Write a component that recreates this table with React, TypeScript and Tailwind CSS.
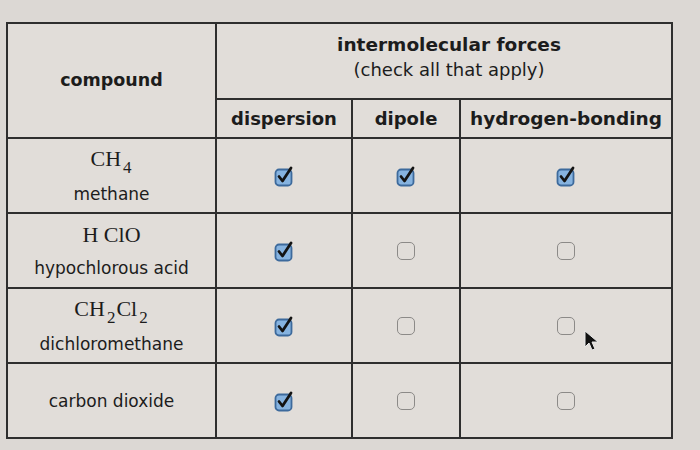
import React from "react";

type Row = {
  formula: React.ReactNode;
  name: string;
  checks: [boolean, boolean, boolean];
};

const sub = (n: string) => (
  <span className="relative top-[7px] text-[17px] ml-[2px] mr-[1px]">{n}</span>
);

const ROWS: Row[] = [
  { formula: <>CH{sub("4")}</>, name: "methane", checks: [true, true, true] },
  { formula: <>H ClO</>, name: "hypochlorous acid", checks: [true, false, false] },
  { formula: <>CH{sub("2")}Cl{sub("2")}</>, name: "dichloromethane", checks: [true, false, false] },
  { formula: null, name: "carbon dioxide", checks: [true, false, false] },
];

function Checked() {
  return (
    <svg width="22" height="22" viewBox="0 0 22 22" className="mx-auto block">
      <rect x="2.5" y="4.5" width="16" height="16" rx="3.5" fill="#86b3e0" stroke="#3d6a9c" strokeWidth="1.8" />
      <path d="M6 11.5 L9.5 16 L18 3" fill="none" stroke="#141414" strokeWidth="2.8" strokeLinecap="round" strokeLinejoin="round" />
    </svg>
  );
}

function Unchecked() {
  return <div className="mx-auto w-[18px] h-[18px] rounded-[5px] border-[1.5px] border-[#8c8a88]" />;
}

export default function App() {
  return (
    <div
      className="relative w-[700px] h-[450px] bg-[#dcd8d4] overflow-hidden pt-[22px] pl-[6px]"
      style={{ fontFamily: '"DejaVu Sans", Verdana, sans-serif' }}
    >
      <table className="border-collapse table-fixed w-[665px] text-[#1c1c1c] bg-[#e1ddd9]">
        <colgroup>
          <col className="w-[209px]" />
          <col className="w-[136px]" />
          <col className="w-[108px]" />
          <col className="w-[212px]" />
        </colgroup>
        <thead>
          <tr className="h-[76px]">
            <th rowSpan={2} className="border-2 border-[#2e2e2e] text-[17.5px] font-bold">
              compound
            </th>
            <th colSpan={3} className="border-2 border-[#2e2e2e] text-center align-middle pl-[10px] pb-[8px]">
              <div className="text-[18.5px] font-bold leading-[25px]">intermolecular forces</div>
              <div className="text-[18px] font-normal leading-[25px]">(check all that apply)</div>
            </th>
          </tr>
          <tr className="h-[39px]">
            <th className="border-2 border-[#2e2e2e] text-[18px] font-bold">dispersion</th>
            <th className="border-[1px] border-l-2 border-b-2 border-[#2e2e2e] text-[18px] font-bold">dipole</th>
            <th className="border-2 border-[#2e2e2e] text-[18.5px] font-bold">hydrogen-bonding</th>
          </tr>
        </thead>
        <tbody>
          {ROWS.map((row) => (
            <tr key={row.name} className="h-[75px]">
              <td className="border-2 border-[#2e2e2e] text-center">
                {row.formula && (
                  <div
                    className="text-[22px] leading-[26px] mb-[9px]"
                    style={{ fontFamily: '"Liberation Serif", "Times New Roman", serif' }}
                  >
                    {row.formula}
                  </div>
                )}
                <div className="text-[17px] leading-[22px]">{row.name}</div>
              </td>
              {row.checks.map((c, i) => (
                <td
                  key={i}
                  className={
                    i === 1
                      ? "border-y-2 border-x-[1px] border-[#2e2e2e] border-r-[#5a5a5a]"
                      : "border-2 border-[#2e2e2e]"
                  }
                >
                  {c ? <Checked /> : <Unchecked />}
                </td>
              ))}
            </tr>
          ))}
        </tbody>
      </table>

      {/* mouse pointer */}
      <svg width="16" height="22" viewBox="0 0 16 22" className="absolute left-[584px] top-[330px]">
        <path d="M1 1 L1 17 L5 13 L8 20 L11 19 L8 12 L14 12 Z" fill="#111" stroke="#e8e8e8" strokeWidth="1" />
      </svg>
    </div>
  );
}
